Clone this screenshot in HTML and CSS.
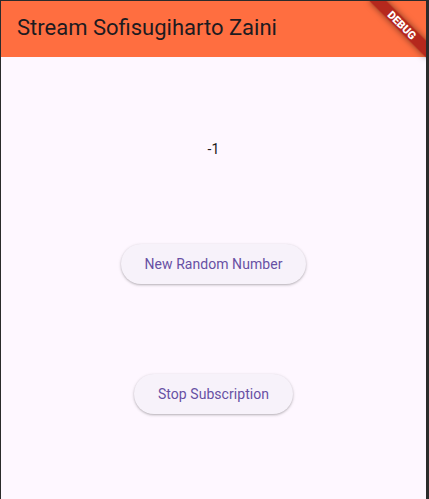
FILE: index.html
```html
<!DOCTYPE html>
<html>
<head>
<meta charset="utf-8">
<link rel="stylesheet" href="styles.css">
</head>
<body>
<div class="frame">
  <div class="app">
    <header class="appbar">
      <h1 class="title">Stream Sofisugiharto Zaini</h1>
    </header>
    <main class="body">
      <div class="value">-1</div>
      <button class="btn">New Random Number</button>
      <button class="btn">Stop Subscription</button>
    </main>
    <div class="debug"><span>DEBUG</span></div>
  </div>
</div>
</body>
</html>
```
FILE: styles.css
```css
html, body {
  margin: 0;
  padding: 0;
  background: #2b2b2b;
}
.frame {
  width: 429px;
  height: 499px;
  box-sizing: border-box;
  border-top: 1px solid #2b2b2b;
  border-left: 1px solid #2b2b2b;
  border-right: 3px solid #2b2b2b;
  background: #2b2b2b;
}
.app {
  position: relative;
  overflow: hidden;
  height: 100%;
  display: flex;
  flex-direction: column;
  background: #fef7ff;
  font-family: Roboto, "Noto Sans", sans-serif;
}
.appbar {
  height: 56px;
  flex: none;
  background: #ff6e40;
  display: flex;
  align-items: center;
  padding: 0 16px;
}
.title {
  margin: 0;
  font-size: 22px;
  font-weight: 400;
  line-height: 28px;
  color: #1d1b20;
  margin-top: -2px;
}
.body {
  flex: 1;
  display: flex;
  flex-direction: column;
  align-items: center;
  justify-content: space-evenly;
}
.value {
  font-size: 14px;
  line-height: 20px;
  color: #1d1b20;
  letter-spacing: 0.25px;
}
.btn {
  margin: 4px 0;
  height: 40px;
  width: auto;
  padding: 0 24px;
  border: none;
  border-radius: 20px;
  background: #f7f2fa;
  color: #6750a4;
  font-family: Roboto, "Noto Sans", sans-serif;
  font-size: 14px;
  font-weight: 400;
  letter-spacing: 0.05px;
  box-shadow: 0 1px 2px rgba(0,0,0,0.2), 0 1px 3px 1px rgba(0,0,0,0.08);
}
.debug {
  position: absolute;
  left: 361px;
  top: 18px;
  width: 80px;
  height: 12px;
  transform: rotate(45deg);
  background: rgba(168, 28, 24, 0.85);
  box-shadow: 0 0 6px rgba(0,0,0,0.5);
  display: flex;
  align-items: center;
  justify-content: center;
}
.debug span {
  color: #fff;
  font-family: Roboto, "Noto Sans", sans-serif;
  font-size: 11px;
  font-weight: 900;
  line-height: 1;
}
```
